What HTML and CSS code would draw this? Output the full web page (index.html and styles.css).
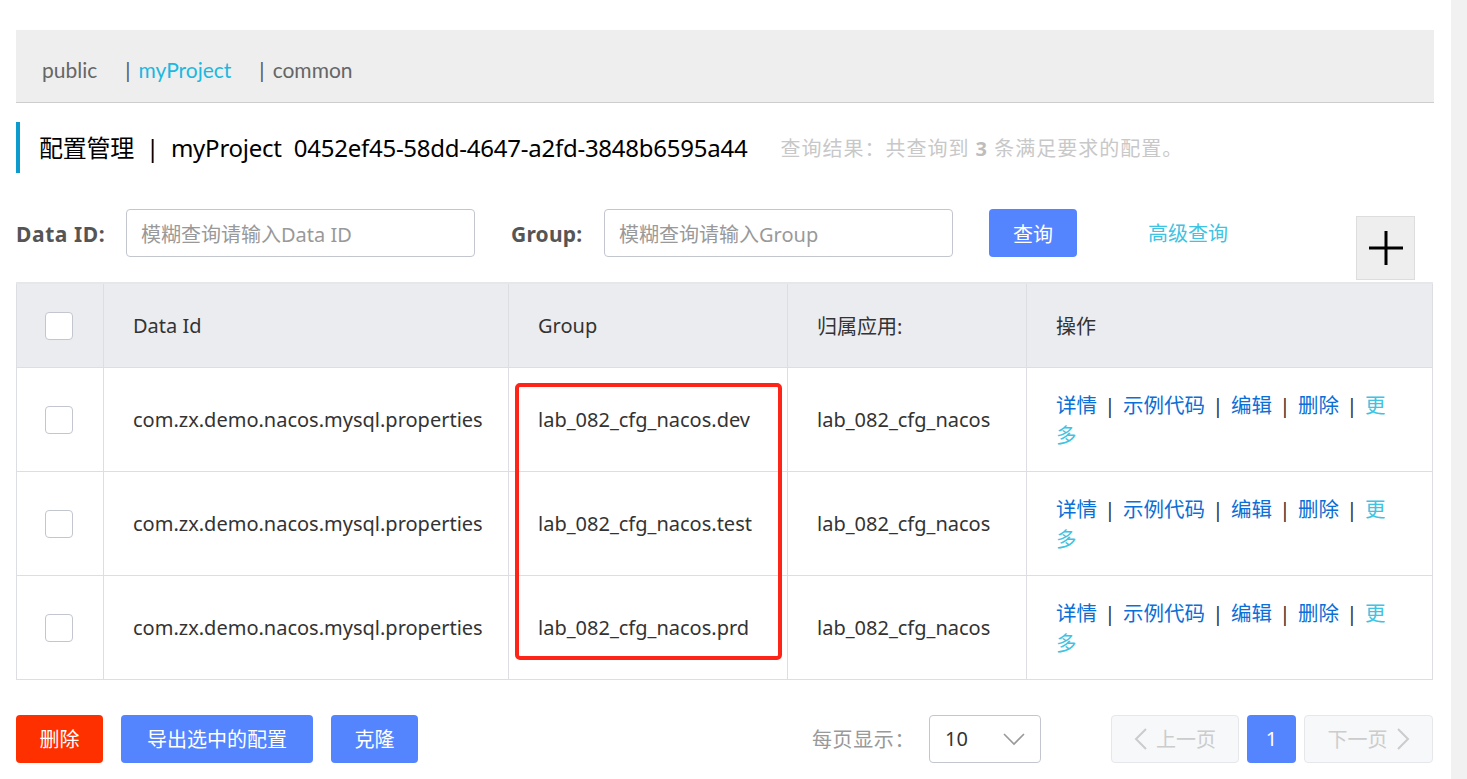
FILE: index.html
```html
<!DOCTYPE html>
<html lang="zh-CN">
<head>
<meta charset="utf-8">
<title>配置管理</title>
<link rel="stylesheet" href="styles.css">
</head>
<body>
<div class="page">
  <main class="main">
    <div class="tabs">
      <span class="tab">public</span>
      <span class="sep">|</span><span class="tab active">myProject</span>
      <span class="sep">|</span><span class="tab">common</span>
    </div>

    <div class="title-row">
      <h1 class="title">配置管理&nbsp;&nbsp;|&nbsp;&nbsp;myProject&nbsp;&nbsp;0452ef45-58dd-4647-a2fd-3848b6595a44</h1>
      <span class="result">查询结果：共查询到 <b>3</b> 条满足要求的配置。</span>
    </div>

    <div class="search">
      <label class="label">Data ID:</label>
      <div class="input"><span class="ph">模糊查询请输入Data ID</span></div>
      <label class="label label-group">Group:</label>
      <div class="input"><span class="ph">模糊查询请输入Group</span></div>
      <button class="btn btn-primary btn-query">查询</button>
      <a class="adv">高级查询</a>
      <button class="plus" aria-label="add">
        <svg width="36" height="36" viewBox="0 0 36 36"><path d="M1 18H35M18 1V35" stroke="#000" stroke-width="3"/></svg>
      </button>
    </div>

    <div class="table-wrap">
      <table class="table">
        <colgroup>
          <col class="c1"><col class="c2"><col class="c3"><col class="c4"><col class="c5">
        </colgroup>
        <thead>
          <tr>
            <th class="cb-cell"><span class="cb"></span></th>
            <th>Data Id</th>
            <th>Group</th>
            <th>归属应用:</th>
            <th>操作</th>
          </tr>
        </thead>
        <tbody>
          <tr>
            <td class="cb-cell"><span class="cb"></span></td>
            <td>com.zx.demo.nacos.mysql.properties</td>
            <td>lab_082_cfg_nacos.dev</td>
            <td>lab_082_cfg_nacos</td>
            <td class="ops"><a>详情</a> <span class="bar">|</span> <a>示例代码</a> <span class="bar">|</span> <a>编辑</a> <span class="bar">|</span> <a>删除</a> <span class="bar">|</span> <span class="more">更</span><span class="more">多</span></td>
          </tr>
          <tr>
            <td class="cb-cell"><span class="cb"></span></td>
            <td>com.zx.demo.nacos.mysql.properties</td>
            <td>lab_082_cfg_nacos.test</td>
            <td>lab_082_cfg_nacos</td>
            <td class="ops"><a>详情</a> <span class="bar">|</span> <a>示例代码</a> <span class="bar">|</span> <a>编辑</a> <span class="bar">|</span> <a>删除</a> <span class="bar">|</span> <span class="more">更</span><span class="more">多</span></td>
          </tr>
          <tr>
            <td class="cb-cell"><span class="cb"></span></td>
            <td>com.zx.demo.nacos.mysql.properties</td>
            <td>lab_082_cfg_nacos.prd</td>
            <td>lab_082_cfg_nacos</td>
            <td class="ops"><a>详情</a> <span class="bar">|</span> <a>示例代码</a> <span class="bar">|</span> <a>编辑</a> <span class="bar">|</span> <a>删除</a> <span class="bar">|</span> <span class="more">更</span><span class="more">多</span></td>
          </tr>
        </tbody>
      </table>
      <div class="highlight"></div>
    </div>

    <div class="footer">
      <div class="actions">
        <button class="btn btn-danger">删除</button>
        <button class="btn btn-primary btn-export">导出选中的配置</button>
        <button class="btn btn-primary btn-clone">克隆</button>
      </div>
      <div class="pager">
        <span class="per">每页显示：</span>
        <div class="select"><span>10</span>
          <svg width="22" height="14" viewBox="0 0 22 14"><path d="M1 2L11 12L21 2" fill="none" stroke="#999" stroke-width="1.6"/></svg>
        </div>
        <button class="pg pg-disabled pg-prev">
          <svg width="14" height="22" viewBox="0 0 14 22"><path d="M12 1L2 11L12 21" fill="none" stroke="#ccc" stroke-width="2"/></svg>
          上一页</button>
        <button class="pg pg-current">1</button>
        <button class="pg pg-disabled pg-next">下一页
          <svg width="14" height="22" viewBox="0 0 14 22"><path d="M2 1L12 11L2 21" fill="none" stroke="#ccc" stroke-width="2"/></svg>
        </button>
      </div>
    </div>
  </main>
  <div class="scrollbar"></div>
</div>
</body>
</html>
```

FILE: styles.css
```css
* { box-sizing: border-box; }
html, body { margin: 0; padding: 0; background: #fff; }
body {
  font-family: "Noto Sans", "Noto Sans CJK SC", sans-serif;
  color: #333;
  font-size: 20px;
}
.page { display: flex; min-height: 779px; }
.main { width: 1418px; margin-left: 16px; padding-top: 30px; }
.scrollbar { width: 16px; margin-left: auto; background: #f1f1f1; }

/* tabs */
.tabs {
  height: 73px;
  background: #eeeeee;
  border-bottom: 1px solid #cccccc;
  display: flex;
  align-items: center;
  padding-left: 26px;
  padding-top: 6px;
  font-family: "Lato", "Noto Sans", sans-serif;
  font-size: 21px;
  color: #666;
}
.tab { color: #666; }
.tab.active { color: #1cb8df; }
.sep { color: #555; margin-left: 28px; margin-right: 8px; }

/* title */
.title-row {
  margin-top: 19px;
  height: 51px;
  border-left: 4px solid #0b9ccd;
  display: flex;
  align-items: center;
  padding-left: 19px;
  padding-bottom: 3px;
}
.title {
  margin: 0;
  font-size: 24px;
  font-weight: normal;
  color: #000;
  letter-spacing: -0.25px;
}
.result {
  margin-left: 33px;
  font-size: 20px;
  color: #c8c8c8;
  padding-top: 2px;
  letter-spacing: 1px;
}
.result b { color: #bdbdbd; }

/* search */
.search {
  margin-top: 36px;
  display: flex;
  align-items: flex-start;
  height: 73px;
}
.label {
  font-weight: bold;
  color: #555;
  font-size: 21px;
  letter-spacing: 0.6px;
  line-height: 50px;
  width: 110px;
}
.label-group { width: 93px; margin-left: 36px; letter-spacing: 0.2px; }
.input {
  width: 349px;
  height: 48px;
  border: 1px solid #c4c6cf;
  border-radius: 4px;
  display: flex;
  align-items: center;
  padding-left: 14px;
}
.ph { color: #999; font-size: 20px; }
.btn {
  height: 48px;
  border: none;
  border-radius: 4px;
  color: #fff;
  font-family: "Noto Sans", "Noto Sans CJK SC", sans-serif;
  font-size: 20px;
  padding: 0;
  cursor: pointer;
}
.btn-primary { background: #5584ff; }
.btn-danger { background: #ff3000; width: 87px; }
.btn-query { width: 88px; margin-left: 36px; }
.adv { margin-left: 71px; color: #3ec3e3; line-height: 50px; font-size: 20px; }
.plus {
  margin-left: auto;
  margin-right: 19px;
  margin-top: 7px;
  width: 59px;
  height: 64px;
  background: #eeeeee;
  border: 1px solid #dddddd;
  padding: 0;
  display: flex;
  align-items: center;
  justify-content: center;
}

/* table */
.table-wrap { position: relative; width: 1416px; }
.table {
  width: 1416px;
  border-collapse: collapse;
  table-layout: fixed;
  border-top: 2px solid #e6e7eb;
}
.c1 { width: 87px; }
.c2 { width: 405px; }
.c3 { width: 279px; }
.c4 { width: 239px; }
.c5 { width: 406px; }
.table th, .table td {
  border: 1px solid #dcdee3;
  text-align: left;
  font-weight: normal;
  padding: 0 29px;
  font-size: 20px;
  color: #333;
}
.table th { background: #ebecf0; height: 84px; }
.table td { height: 104px; }
.table .cb-cell { padding: 0; text-align: center; }
.cb {
  display: inline-block;
  width: 28px;
  height: 28px;
  border: 1px solid #c4c6cf;
  border-radius: 4px;
  background: #fff;
  vertical-align: middle;
  margin-left: -2px;
}
.table td.ops { line-height: 30px; padding: 1px 40px 0 29px; font-size: 20.5px; }
.ops a { color: #0a6fd6; }
.ops .more { color: #3ec3e3; cursor: pointer; }
.ops .bar { color: #333; margin: 0 2px; }
.highlight {
  position: absolute;
  left: 499px;
  top: 101px;
  width: 267px;
  height: 277px;
  border: 4px solid #ff2418;
  border-radius: 5px;
}

/* footer */
.footer {
  margin-top: 35px;
  display: flex;
  align-items: center;
  height: 48px;
}
.actions { display: flex; gap: 18px; }
.btn-export { width: 192px; }
.btn-clone { width: 87px; }
.pager { margin-left: auto; margin-right: 1px; display: flex; align-items: center; }
.per { color: #999; font-size: 20px; margin-right: 14px; letter-spacing: 0.6px; }
.select {
  width: 112px;
  height: 48px;
  border: 1px solid #c4c6cf;
  border-radius: 4px;
  display: flex;
  align-items: center;
  justify-content: space-between;
  padding: 0 15px 0 15px;
  font-size: 20px;
  color: #333;
  margin-right: 70px;
}
.pg {
  height: 48px;
  border-radius: 4px;
  font-family: "Noto Sans", "Noto Sans CJK SC", sans-serif;
  font-size: 20px;
  display: flex;
  align-items: center;
  justify-content: center;
  gap: 8px;
  padding: 0;
}
.pg-disabled { background: #f7f8fa; border: 1px solid #e6e7eb; color: #cccccc; }
.pg-prev { width: 128px; }
.pg-next { width: 129px; }
.pg-current { width: 49px; background: #5584ff; color: #fff; border: none; margin: 0 8px; }
```
